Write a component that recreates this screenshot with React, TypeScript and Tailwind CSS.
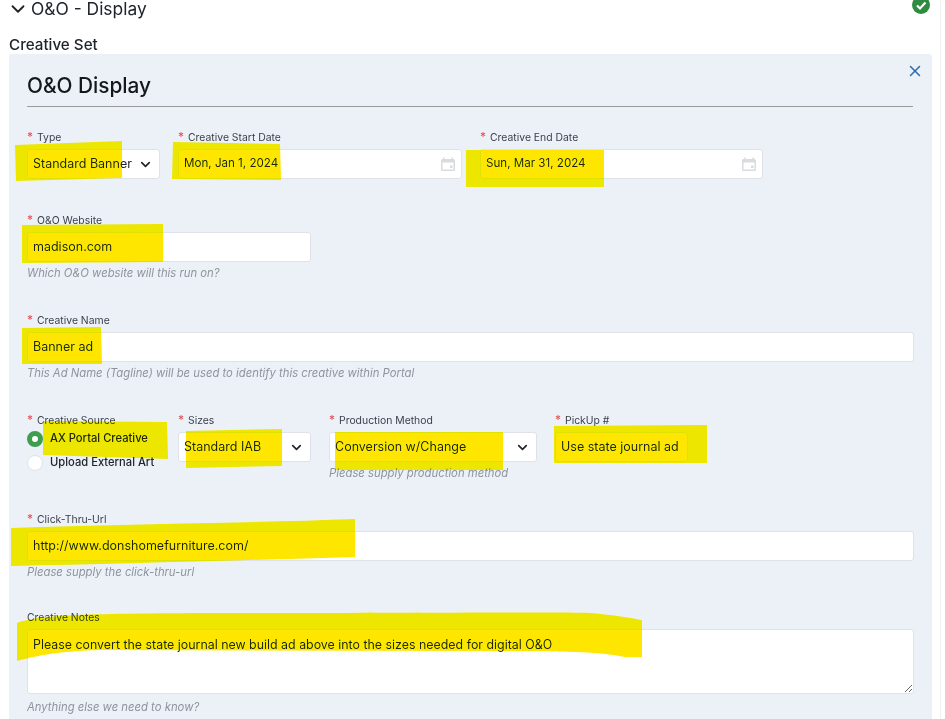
import { ChevronDown, X } from 'lucide-react';

const font = { fontFamily: 'Inter, "Noto Sans", sans-serif' };

function Label({ children, required = true }: { children: string; required?: boolean }) {
  return (
    <label className="block h-[13px] mb-[5px] text-[10.4px] leading-[12px] text-[#3a3f4a] whitespace-nowrap">
      {required && <span className="text-[#e5484d] mr-1 text-[12px]">*</span>}
      {children}
    </label>
  );
}

function Hint({ children }: { children: string }) {
  return <p className="mt-[4px] h-[15px] text-[11.3px] leading-[15px] italic text-[#8f949c] whitespace-nowrap">{children}</p>;
}

function Field({ value, className = '' }: { value: string; className?: string }) {
  return (
    <div className={`h-[30px] bg-white border border-[#dfe2e8] rounded-[3px] pl-[5px] pr-[6px] flex items-center text-[12.5px] text-[#20242c] whitespace-nowrap ${className}`}>
      {value}
    </div>
  );
}

function SelectBox({ value }: { value: string }) {
  return (
    <div className="h-[30px] bg-white border border-[#dfe2e8] rounded-[3px] pl-[5px] pr-[6px] flex items-center justify-between text-[12.5px] text-[#20242c] whitespace-nowrap">
      <span>{value}</span>
      <ChevronDown className="w-[15px] h-[15px] text-[#222]" strokeWidth={2.6} />
    </div>
  );
}

function DateBox({ value }: { value: string }) {
  return (
    <div className="h-[30px] bg-white border border-[#dfe2e8] rounded-[3px] pl-[5px] pr-[5px] flex items-center justify-between text-[11.6px] text-[#20242c] whitespace-nowrap">
      <span>{value}</span>
      <svg viewBox="0 0 16 16" className="w-[16px] h-[16px]" fill="#d9dbdf">
        <path d="M3 1.5h1.5V3h7V1.5H13V3h.5A1.5 1.5 0 0 1 15 4.5v9a1.5 1.5 0 0 1-1.5 1.5h-11A1.5 1.5 0 0 1 1 13.5v-9A1.5 1.5 0 0 1 2.5 3H3zM2.5 6.5v7h11v-7zM10 9.5h2.5V12H10z" fillRule="evenodd" />
      </svg>
    </div>
  );
}

function Highlights() {
  return (
    <svg className="absolute left-0 top-0 w-[945px] h-[719px] pointer-events-none mix-blend-darken" viewBox="0 0 945 719">
      <g fill="#ffe600">
        <path d="M15 145 L122 141 L122 178 L16 181 Z" />
        <path d="M173 142 L280 144 L281 180 L172 179 Z" />
        <path d="M466 150 L604 150 L604 187 L466 187 Z" />
        <path d="M22 225 L163 224 L163 262 L22 263 Z" />
        <path d="M22 328 L101 327 L102 364 L22 364 Z" />
        <path d="M43 421 L167 422 L168 459 L43 455 Z" />
        <path d="M186 431 L282 429 L282 466 L186 468 Z" />
        <path d="M335 432 L503 432 L503 470 L335 470 Z" />
        <path d="M554 426 L707 425 L707 463 L554 463 Z" />
        <path d="M11 528 C120 524 250 523 355 519 L355 557 C250 560 120 564 11 566 Z" />
        <path d="M17 623 C40 613 120 613 300 613 C450 613 560 612 590 613 C615 615 630 618 642 620 L642 657 L625 657 C600 652 570 651 500 651 L100 650 C60 651 35 656 17 661 Z" />
      </g>
    </svg>
  );
}

export default function App() {
  return (
    <div className="relative w-[945px] h-[719px] overflow-hidden bg-white" style={font}>
      <div className="w-[941px] h-[719px] border-r border-[#f0f0f0]">
        <div className="flex items-center justify-between pl-[7px] pr-[10px] h-[18px]">
          <div className="flex items-center h-[18px] text-[17.4px] leading-[18px] text-[#20242c]">
            <ChevronDown className="-my-[2px] w-[22px] h-[22px] text-[#222]" strokeWidth={2} />
            <span className="ml-[2px]">O&amp;O - Display</span>
          </div>
          <svg viewBox="0 0 18 18" className="w-[18px] h-[18px] -mt-[8px]">
            <circle cx="9" cy="9" r="9" fill="#2e8b40" />
            <path d="M5 9.5l3 3 5.5-6" stroke="#fff" strokeWidth="2.2" fill="none" />
          </svg>
        </div>

        <h3 className="ml-[9px] mt-[17px] h-[19px] text-[15.2px] leading-[19px] font-medium text-[#20242c]">Creative Set</h3>

        <div className="relative ml-[9px] w-[923px] h-[700px] bg-[#ecf1f8] rounded-[3px] px-[18px] pt-[19px]">
          <X className="absolute right-[8px] top-[8px] w-[18px] h-[18px] text-[#2b6cb0]" strokeWidth={2} />
          <h2 className="h-[26px] text-[20.8px] leading-[26px] font-medium text-[#14171c]">O&amp;O Display</h2>
          <div className="mt-[7px] w-[886px] border-t border-[#9b9b9b]" />

          <div className="mt-[24px] flex gap-[18px]">
            <div className="w-[133px]"><Label>Type</Label><SelectBox value="Standard Banner" /></div>
            <div className="w-[284px]"><Label>Creative Start Date</Label><DateBox value="Mon, Jan 1, 2024" /></div>
            <div className="w-[283px]"><Label>Creative End Date</Label><DateBox value="Sun, Mar 31, 2024" /></div>
          </div>

          <div className="mt-[35px] w-[284px]">
            <Label>O&amp;O Website</Label>
            <Field value="madison.com" />
            <Hint>Which O&amp;O website will this run on?</Hint>
          </div>

          <div className="mt-[33px] w-[887px]">
            <Label>Creative Name</Label>
            <Field value="Banner ad" />
            <Hint>This Ad Name (Tagline) will be used to identify this creative within Portal</Hint>
          </div>

          <div className="mt-[33px] flex gap-[18px]">
            <div className="w-[133px]">
              <Label>Creative Source</Label>
              <div className="-mt-[2px] flex items-center gap-[7px] h-[17px] text-[11.2px] font-medium text-[#20242c] whitespace-nowrap">
                <span className="w-[16px] h-[16px] rounded-full border-[5px] border-[#3f9d50] bg-white" />
                AX Portal Creative
              </div>
              <div className="mt-[7px] flex items-center gap-[7px] h-[17px] text-[11.2px] font-medium text-[#20242c] whitespace-nowrap">
                <span className="w-[16px] h-[16px] rounded-full border border-[#dfe2e8] bg-white" />
                Upload External Art
              </div>
            </div>
            <div className="w-[133px]"><Label>Sizes</Label><SelectBox value="Standard IAB" /></div>
            <div className="w-[208px]">
              <Label>Production Method</Label>
              <SelectBox value="Conversion w/Change" />
              <Hint>Please supply production method</Hint>
            </div>
            <div className="w-[133px]"><Label>PickUp #</Label><Field value="Use state journal ad" /></div>
          </div>

          <div className="mt-[32px] w-[887px]">
            <Label>Click-Thru-Url</Label>
            <Field value="http://www.donshomefurniture.com/" />
            <Hint>Please supply the click-thru-url</Hint>
          </div>

          <div className="mt-[32px] w-[887px]">
            <Label required={false}>Creative Notes</Label>
            <textarea
              readOnly
              value="Please convert the state journal new build ad above into the sizes needed for digital O&O"
              className="block -mt-[1px] mb-[6px] w-full h-[65px] bg-white border border-[#dfe2e8] rounded-[3px] px-[5px] py-[6px] text-[12.4px] text-[#20242c] outline-none"
            />
            <Hint>Anything else we need to know?</Hint>
          </div>
        </div>
      </div>

      <Highlights />
    </div>
  );
}
